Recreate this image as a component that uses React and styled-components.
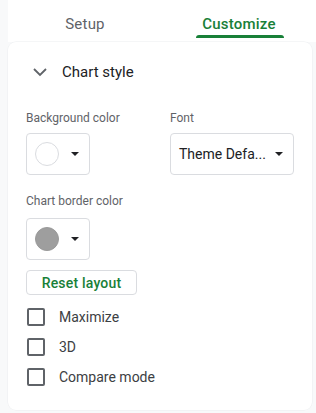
import React from 'react';
import styled, { createGlobalStyle } from 'styled-components';

const GlobalStyle = createGlobalStyle`
  html, body {
    margin: 0;
    padding: 0;
    background: #f8f9fa;
    font-family: Roboto, 'Liberation Sans', Arial, sans-serif;
  }
`;

const Page = styled.div`
  width: 316px;
  height: 413px;
  display: flex;
  flex-direction: column;
  padding: 0 4px 3px 8px;
  box-sizing: border-box;
  overflow: hidden;
`;

const Tabs = styled.div`
  display: flex;
  height: 42px;
  background: #fff;
  margin-right: -4px;
`;

const Tab = styled.div`
  position: relative;
  flex: 1;
  display: flex;
  align-items: center;
  justify-content: center;
  box-sizing: border-box;
  height: 38px;
  padding-top: 9px;
  font-size: 15px;
  font-weight: ${({ active }) => (active ? 500 : 400)};
  letter-spacing: 0.2px;
  color: ${({ active }) => (active ? '#188038' : '#5f6368')};

  ${({ active }) =>
    active &&
    `
    &::after {
      content: '';
      position: absolute;
      bottom: 0;
      left: 34px;
      right: 32px;
      height: 3px;
      background: #188038;
      border-radius: 3px 3px 0 0;
    }
  `}
`;

const Card = styled.div`
  flex: 1;
  background: #fff;
  border-radius: 8px;
  padding: 0 18px;
  box-shadow: 0 0 0 0.5px #eceef0;
`;

const SectionHeader = styled.div`
  display: flex;
  align-items: center;
  gap: 14px;
  height: 60px;
  margin-bottom: 8px;
  padding-left: 6px;
  font-size: 15px;
  color: #202124;
`;

const Row = styled.div`
  display: flex;
`;

const Field = styled.div`
  display: flex;
  flex-direction: column;
  width: ${({ width }) => width}px;
`;

const Label = styled.div`
  font-size: 12px;
  color: #5f6368;
  height: 16px;
  line-height: 16px;
  margin-top: ${({ top }) => top || 0}px;
  margin-bottom: ${({ bottom }) => bottom || 7}px;
`;

const SelectBox = styled.div`
  display: flex;
  align-items: center;
  justify-content: space-between;
  box-sizing: border-box;
  width: ${({ width }) => width}px;
  height: 42px;
  border: 1px solid #dadce0;
  border-radius: 4px;
  padding: 0 10px 0 8px;
`;

const Swatch = styled.div`
  width: 24px;
  height: 24px;
  border-radius: 50%;
  box-sizing: border-box;
  background: ${({ color }) => color};
  border: 1px solid ${({ color }) => (color === '#fff' ? '#dadce0' : '#9a9a9a')};
`;

const Caret = styled.div`
  width: 0;
  height: 0;
  border-left: 4px solid transparent;
  border-right: 4px solid transparent;
  border-top: 4px solid #202124;
`;

const SelectText = styled.span`
  font-size: 14px;
  color: #202124;
`;

const ResetButton = styled.div`
  display: inline-flex;
  align-items: center;
  justify-content: center;
  box-sizing: border-box;
  width: 111px;
  height: 25px;
  border: 1px solid #dadce0;
  border-radius: 4px;
  font-size: 14px;
  font-weight: 500;
  color: #188038;
  letter-spacing: 0.2px;
  margin-top: 10px;
`;

const CheckList = styled.div`
  display: flex;
  flex-direction: column;
  gap: 12px;
  margin-top: 13px;
  padding-left: 1px;
`;

const CheckRow = styled.div`
  display: flex;
  align-items: center;
  gap: 14px;
  height: 18px;
  font-size: 14px;
  color: #3c4043;
`;

const Box = styled.div`
  width: 18px;
  height: 18px;
  box-sizing: border-box;
  border: 2px solid #5f6368;
  border-radius: 2px;
`;

const Chevron = () => (
  <svg width="16" height="16" viewBox="0 0 16 16">
    <path d="M2 5l6 6 6-6" fill="none" stroke="#5f6368" strokeWidth="1.8" />
  </svg>
);

const ColorSelect = ({ color }) => (
  <SelectBox width={64}>
    <Swatch color={color} />
    <Caret />
  </SelectBox>
);

const App = () => (
  <>
    <GlobalStyle />
    <Page>
      <Tabs>
        <Tab>Setup</Tab>
        <Tab active>Customize</Tab>
      </Tabs>
      <Card>
        <SectionHeader>
          <Chevron />
          <span>Chart style</span>
        </SectionHeader>
        <Row>
          <Field width={144}>
            <Label>Background color</Label>
            <ColorSelect color="#fff" />
          </Field>
          <Field width={124}>
            <Label>Font</Label>
            <SelectBox width={124}>
              <SelectText>Theme Defa...</SelectText>
              <Caret />
            </SelectBox>
          </Field>
        </Row>
        <Label top={18} bottom={9}>Chart border color</Label>
        <ColorSelect color="#9e9e9e" />
        <ResetButton>Reset layout</ResetButton>
        <CheckList>
          <CheckRow>
            <Box />
            Maximize
          </CheckRow>
          <CheckRow>
            <Box />
            3D
          </CheckRow>
          <CheckRow>
            <Box />
            Compare mode
          </CheckRow>
        </CheckList>
      </Card>
    </Page>
  </>
);

export default App;
